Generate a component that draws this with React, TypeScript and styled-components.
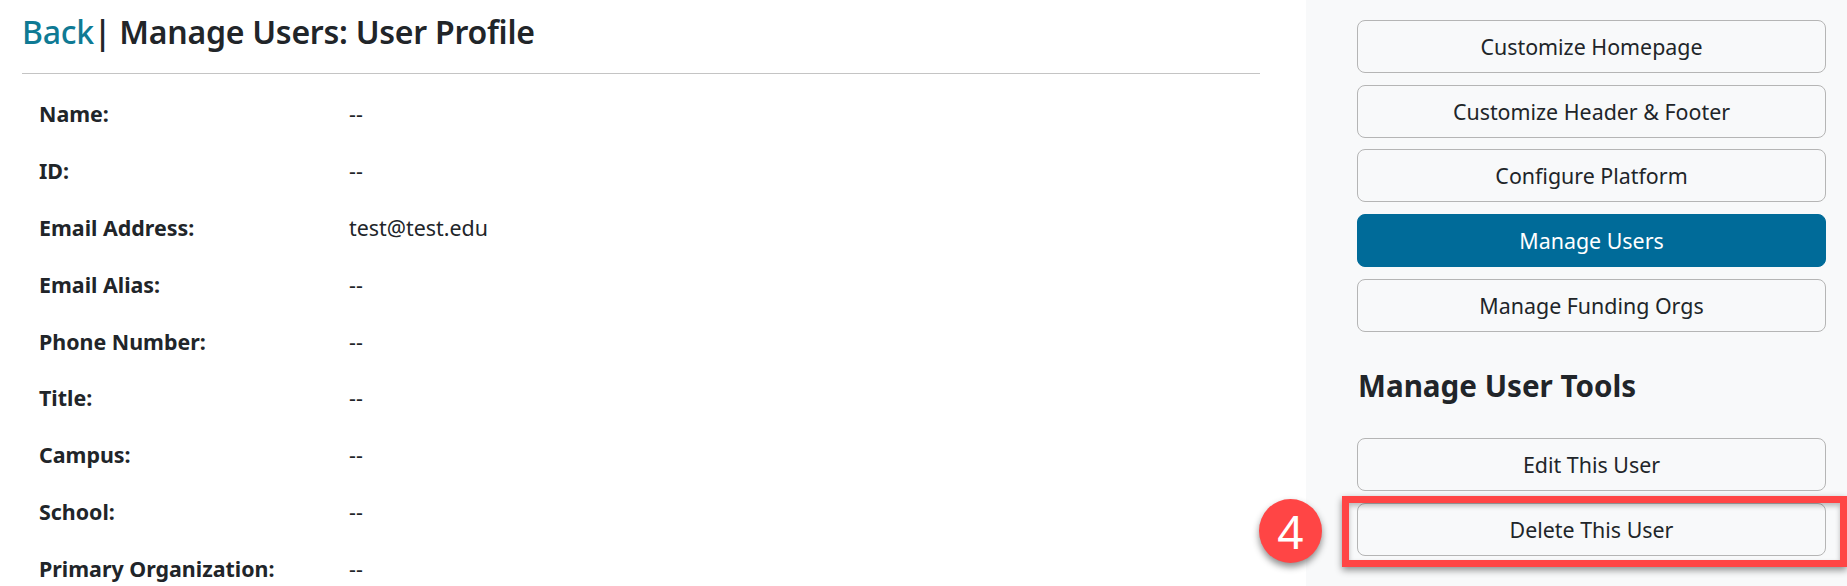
import React from 'react'
import styled, { createGlobalStyle } from 'styled-components'

const GlobalStyle = createGlobalStyle`
  html, body {
    margin: 0;
    padding: 0;
    background: #fff;
    overflow: hidden;
  }
  body {
    font-family: "Noto Sans", "Open Sans", sans-serif;
    color: #212529;
  }
`

const Page = styled.div`
  display: grid;
  grid-template-columns: 1306px 1fr;
  width: 1847px;
  height: 586px;
  overflow: hidden;
`

const Main = styled.main`
  padding: 0 46px 0 22px;
`

const Title = styled.h1`
  margin: 0;
  height: 74px;
  box-sizing: border-box;
  padding-top: 10px;
  font-size: 32px;
  line-height: 44px;
  font-weight: 600;
  letter-spacing: -0.25px;
  border-bottom: 1px solid #c4c4c4;
`

const BackLink = styled.a`
  color: #0f7a94;
  font-weight: 500;
  text-decoration: none;
`

const Details = styled.dl`
  margin: 11px 0 0;
  padding-left: 17px;
`

const DetailRow = styled.div`
  display: grid;
  grid-template-columns: 310px 1fr;
  height: 56.9px;
  align-items: center;
`

const Label = styled.dt`
  font-size: 21.4px;
  font-weight: 700;
`

const Value = styled.dd`
  margin: 0;
  font-size: 21.4px;
`

const Sidebar = styled.aside`
  display: flex;
  flex-direction: column;
  background: #f8f9fa;
  padding: 20px 21px 0 51px;
`

const ButtonStack = styled.div<{ $gap: number }>`
  display: flex;
  flex-direction: column;
  gap: ${p => p.$gap}px;
`

const NavButton = styled.button<{ $active?: boolean }>`
  all: unset;
  box-sizing: border-box;
  height: 53px;
  width: 100%;
  text-align: center;
  font-size: 21.4px;
  border-radius: 8px;
  border: 1px solid ${p => (p.$active ? '#006b99' : '#b5b5b5')};
  background: ${p => (p.$active ? '#006b99' : '#f8f9fa')};
  color: ${p => (p.$active ? '#fff' : '#212529')};
`

const SectionTitle = styled.h2`
  margin: 32px 0 30px 1px;
  font-size: 29.6px;
  line-height: 44px;
  font-weight: 700;
`

const Highlighted = styled.div`
  position: relative;
  display: flex;
`

const RedBox = styled.div`
  position: absolute;
  inset: -7px -21px -11px -15px;
  border: 7px solid #ff4545;
  box-shadow: 0 3px 7px rgba(0, 0, 0, 0.45), inset 0 3px 5px rgba(0, 0, 0, 0.25);
  pointer-events: none;
`

const StepBadge = styled.div`
  position: absolute;
  left: -98px;
  top: -4px;
  width: 63px;
  height: 64px;
  border-radius: 50%;
  background: #ff4545;
  color: #fff;
  font-size: 46px;
  line-height: 64px;
  text-align: center;
  box-shadow: 0 4px 7px rgba(0, 0, 0, 0.45);
`

const fields = [
  { label: 'Name:', value: '--' },
  { label: 'ID:', value: '--' },
  { label: 'Email Address:', value: 'test@test.edu' },
  { label: 'Email Alias:', value: '--' },
  { label: 'Phone Number:', value: '--' },
  { label: 'Title:', value: '--' },
  { label: 'Campus:', value: '--' },
  { label: 'School:', value: '--' },
  { label: 'Primary Organization:', value: '--' },
]

const navItems = ['Customize Homepage', 'Customize Header & Footer', 'Configure Platform', 'Manage Users', 'Manage Funding Orgs']

export default function App() {
  return (
    <>
      <GlobalStyle />
      <Page>
        <Main>
          <Title>
            <BackLink href="#">Back</BackLink>| Manage Users: User Profile
          </Title>
          <Details>
            {fields.map(f => (
              <DetailRow key={f.label}>
                <Label>{f.label}</Label>
                <Value>{f.value}</Value>
              </DetailRow>
            ))}
          </Details>
        </Main>
        <Sidebar>
          <ButtonStack $gap={11.7}>
            {navItems.map(item => (
              <NavButton key={item} $active={item === 'Manage Users'}>{item}</NavButton>
            ))}
          </ButtonStack>
          <SectionTitle>Manage User Tools</SectionTitle>
          <ButtonStack $gap={12}>
            <NavButton>Edit This User</NavButton>
            <Highlighted>
              <NavButton>Delete This User</NavButton>
              <RedBox />
              <StepBadge>4</StepBadge>
            </Highlighted>
          </ButtonStack>
        </Sidebar>
      </Page>
    </>
  )
}
